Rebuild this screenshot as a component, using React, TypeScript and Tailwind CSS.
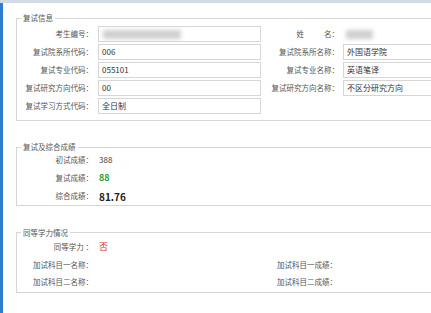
import React from "react";

const font = "font-['Noto_Sans_CJK_SC','Noto_Sans',sans-serif]";

function Legend({ children }: { children: React.ReactNode }) {
  return <legend className="ml-[4px] px-[2px] text-[7.5px] leading-[8px] text-[#555]">{children}</legend>;
}

function Field({ value, blur }: { value?: string; blur?: boolean }) {
  return (
    <div className="h-[16px] border border-[#d6d6d6] bg-white pl-[3px] flex items-center text-[8px] text-[#333] overflow-hidden">
      {blur ? <div className="ml-[1px] h-[9px] w-[78px] bg-[#cfcfcf] blur-[2px]" /> : value}
    </div>
  );
}

const leftRows = [
  { label: "复试院系所代码：", value: "006", rLabel: "复试院系所名称：", rValue: "外国语学院" },
  { label: "复试专业代码：", value: "055101", rLabel: "复试专业名称：", rValue: "英语笔译" },
  { label: "复试研究方向代码：", value: "00", rLabel: "复试研究方向名称：", rValue: "不区分研究方向" },
];

export default function App() {
  return (
    <div className={`w-[431px] h-[313px] overflow-hidden bg-white ${font}`}>
      <div className="h-[3px] bg-[#d2dce6]" />
      <div className="flex h-[310px]">
        <div className="w-[3px] bg-[#2e7bcf]" />
        <div className="flex-1 overflow-hidden pl-[13px] pt-[11px]">
          {/* 复试信息 */}
          <fieldset className="w-[470px] border border-[#d6d6d6] pb-[6px]">
            <Legend>复试信息</Legend>
            <div className="flex flex-col gap-[2px] pt-[4px] text-[7.5px] text-[#555]">
              <div className="grid grid-cols-[81px_163px_82px_140px] items-center h-[16px]">
                <div className="pr-[5px] text-right">考生编号：</div>
                <Field blur />
                <div className="pr-[4px] text-right">
                  姓<span className="ml-[20px]">名：</span>
                </div>
                <div className="pl-[3px] flex items-center">
                  <div className="h-[9px] w-[27px] bg-[#cfcfcf] blur-[2px]" />
                </div>
              </div>
              {leftRows.map((r) => (
                <div key={r.label} className="grid grid-cols-[81px_163px_82px_140px] items-center h-[16px]">
                  <div className="pr-[5px] text-right whitespace-nowrap">{r.label}</div>
                  <Field value={r.value} />
                  <div className="pr-[4px] text-right whitespace-nowrap">{r.rLabel}</div>
                  <Field value={r.rValue} />
                </div>
              ))}
              <div className="grid grid-cols-[81px_163px_82px_140px] items-center h-[16px]">
                <div className="pr-[5px] text-right whitespace-nowrap">复试学习方式代码：</div>
                <Field value="全日制" />
              </div>
            </div>
          </fieldset>

          {/* 复试及综合成绩 */}
          <fieldset className="mt-[22px] w-[470px] border border-[#d6d6d6]">
            <Legend>复试及综合成绩</Legend>
            <div className="flex flex-col text-[7.5px] text-[#555]">
              <div className="flex items-center h-[18px]">
                <div className="w-[81px] pr-[5px] text-right">初试成绩：</div>
                <div className="pl-[1px] text-[8px] text-[#444]">388</div>
              </div>
              <div className="flex items-center h-[18px]">
                <div className="w-[81px] pr-[5px] text-right">复试成绩：</div>
                <div className="pl-[1px] text-[9px] font-bold text-[#2f9b2f]">88</div>
              </div>
              <div className="flex items-center h-[18px]">
                <div className="w-[81px] pr-[5px] text-right">综合成绩：</div>
                <div className="pl-[1px] text-[10px] font-bold text-[#222]">81.76</div>
              </div>
            </div>
          </fieldset>

          {/* 同等学力情况 */}
          <fieldset className="mt-[22.5px] w-[470px] border border-[#d6d6d6] pb-[1px]">
            <Legend>同等学力情况</Legend>
            <div className="flex flex-col pt-[1.5px] text-[7.5px] text-[#555]">
              <div className="flex items-center h-[17.5px]">
                <div className="w-[81px] pr-[5px] text-right">同等学力 ：</div>
                <div className="pl-[1px] text-[9px] text-[#d0312d]">否</div>
              </div>
              <div className="grid grid-cols-[81px_163px_82px] items-center h-[17.5px]">
                <div className="pr-[5px] text-right whitespace-nowrap">加试科目一名称：</div>
                <div />
                <div className="pr-[6px] text-right whitespace-nowrap">加试科目一成绩：</div>
              </div>
              <div className="grid grid-cols-[81px_163px_82px] items-center h-[17.5px]">
                <div className="pr-[5px] text-right whitespace-nowrap">加试科目二名称：</div>
                <div />
                <div className="pr-[6px] text-right whitespace-nowrap">加试科目二成绩：</div>
              </div>
            </div>
          </fieldset>
        </div>
      </div>
    </div>
  );
}
